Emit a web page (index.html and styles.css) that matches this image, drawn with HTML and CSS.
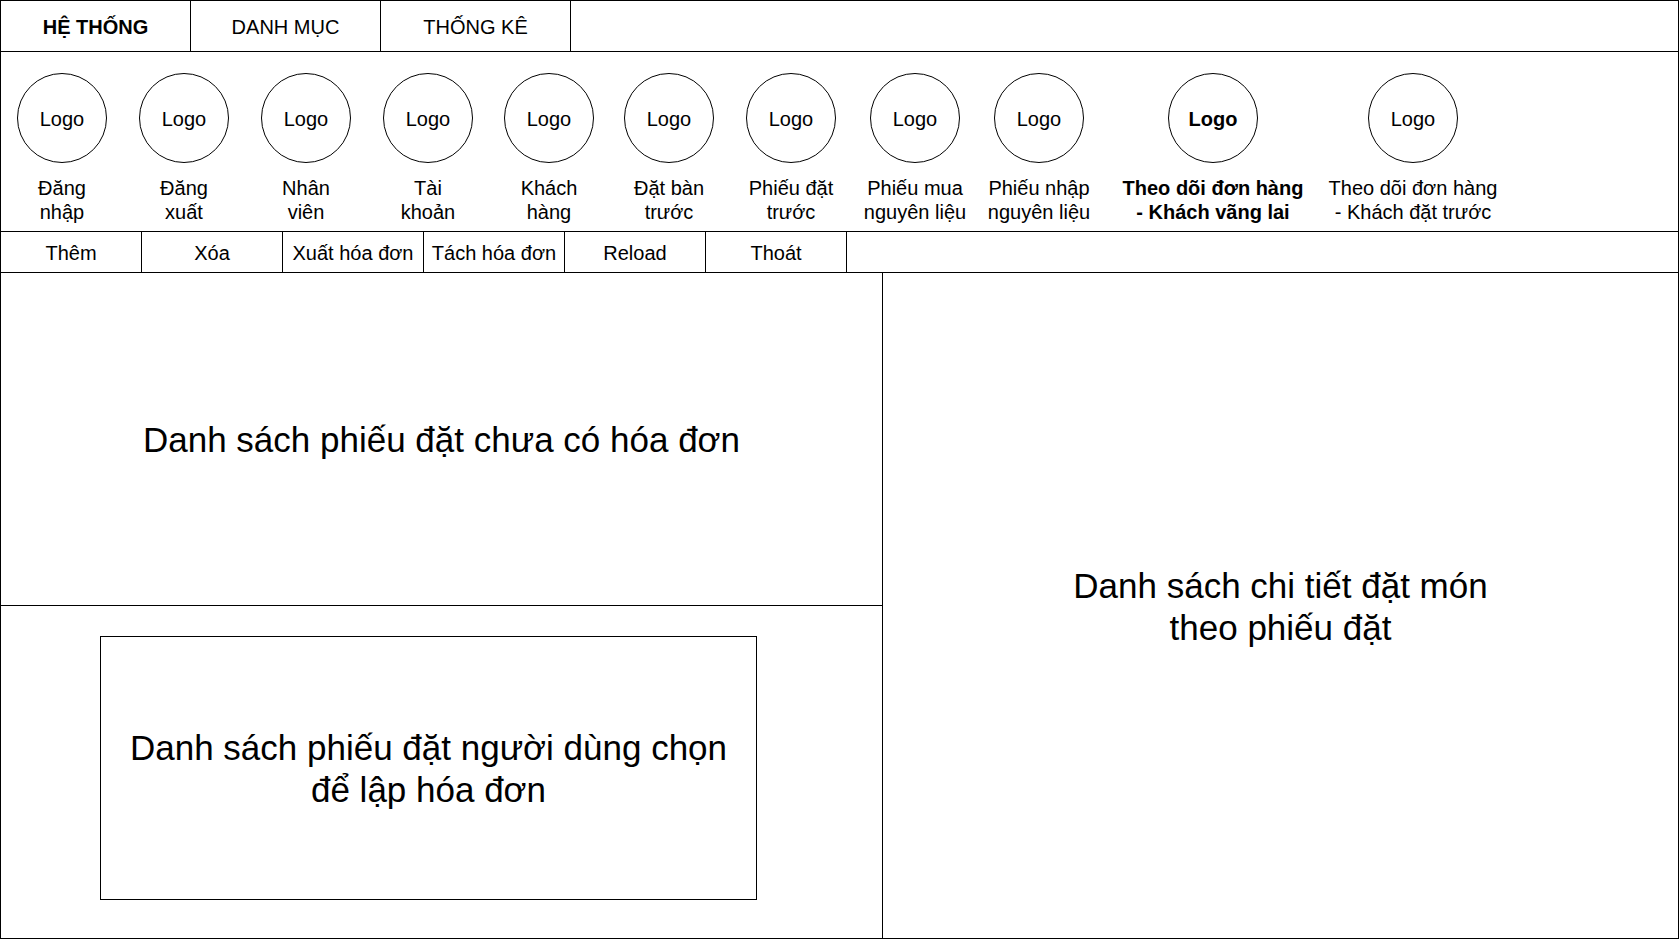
FILE: index.html
```html
<!DOCTYPE html>
<html lang="vi">
<head>
    <meta charset="UTF-8">
    <meta name="viewport" content="width=device-width, initial-scale=1.0">
    <title>Lập hóa đơn</title>
    <link rel="stylesheet" href="styles.css">
</head>
<body>
    <div class="app">
        <div class="tabs">
            <div class="tab active">HỆ THỐNG</div>
            <div class="tab">DANH MỤC</div>
            <div class="tab">THỐNG KÊ</div>
        </div>

        <div class="ribbon">
            <div class="tool">
                <div class="logo">Logo</div>
                <div class="tool-label">Đăng<br>nhập</div>
            </div>
            <div class="tool">
                <div class="logo">Logo</div>
                <div class="tool-label">Đăng<br>xuất</div>
            </div>
            <div class="tool">
                <div class="logo">Logo</div>
                <div class="tool-label">Nhân<br>viên</div>
            </div>
            <div class="tool">
                <div class="logo">Logo</div>
                <div class="tool-label">Tài<br>khoản</div>
            </div>
            <div class="tool tool-narrow">
                <div class="logo">Logo</div>
                <div class="tool-label">Khách<br>hàng</div>
            </div>
            <div class="tool tool-narrow">
                <div class="logo">Logo</div>
                <div class="tool-label">Đặt bàn<br>trước</div>
            </div>
            <div class="tool tool-broad">
                <div class="logo">Logo</div>
                <div class="tool-label">Phiếu đặt<br>trước</div>
            </div>
            <div class="tool tool-broad">
                <div class="logo">Logo</div>
                <div class="tool-label">Phiếu mua<br>nguyên liệu</div>
            </div>
            <div class="tool tool-broad">
                <div class="logo">Logo</div>
                <div class="tool-label">Phiếu nhập<br>nguyên liệu</div>
            </div>
            <div class="tool tool-wide active">
                <div class="logo">Logo</div>
                <div class="tool-label">Theo dõi đơn hàng<br>- Khách vãng lai</div>
            </div>
            <div class="tool tool-last">
                <div class="logo">Logo</div>
                <div class="tool-label">Theo dõi đơn hàng<br>- Khách đặt trước</div>
            </div>
        </div>

        <div class="toolbar">
            <div class="btn">Thêm</div>
            <div class="btn">Xóa</div>
            <div class="btn">Xuất hóa đơn</div>
            <div class="btn">Tách hóa đơn</div>
            <div class="btn">Reload</div>
            <div class="btn">Thoát</div>
        </div>

        <div class="main">
            <div class="left">
                <div class="pane pane-top">
                    <p class="pane-text">Danh sách phiếu đặt chưa có hóa đơn</p>
                </div>
                <div class="pane-bottom">
                    <div class="pane selected-box">
                        <p class="pane-text">Danh sách phiếu đặt người dùng chọn<br>để lập hóa đơn</p>
                    </div>
                </div>
            </div>
            <div class="pane right">
                <p class="pane-text">Danh sách chi tiết đặt món<br>theo phiếu đặt</p>
            </div>
        </div>
    </div>
</body>
</html>
```

FILE: styles.css
```css
* {
    box-sizing: border-box;
}

body {
    margin: 0;
    padding: 0;
    font-family: "Liberation Sans", Arial, sans-serif;
    color: #000;
    background-color: #fff;
}

.app {
    width: 1679px;
    height: 939px;
    border: 1px solid #000;
    display: flex;
    flex-direction: column;
}

/* tabs */
.tabs {
    display: flex;
    flex: none;
    height: 51px;
    border-bottom: 1px solid #000;
}

.tab {
    width: 190px;
    padding-top: 2px;
    border-right: 1px solid #000;
    display: flex;
    align-items: center;
    justify-content: center;
    font-size: 20px;
}

.tab.active {
    font-weight: bold;
}

/* ribbon with logos */
.ribbon {
    display: flex;
    flex: none;
    height: 180px;
    padding-top: 21px;
    border-bottom: 1px solid #000;
}

.tool {
    width: 122px;
    display: flex;
    flex-direction: column;
    align-items: center;
    font-size: 20px;
}

.tool-narrow {
    width: 120px;
}

.tool-broad {
    width: 124px;
}

.tool-wide {
    width: 224px;
}

.tool-last {
    width: 176px;
}

.tool.active {
    font-weight: bold;
}

.logo {
    width: 90px;
    height: 90px;
    padding-top: 2px;
    border: 1px solid #000;
    border-radius: 50%;
    display: flex;
    align-items: center;
    justify-content: center;
}

.tool-label {
    margin-top: 13px;
    line-height: 24px;
    text-align: center;
    white-space: nowrap;
}

/* buttons */
.toolbar {
    display: flex;
    flex: none;
    height: 41px;
    border-bottom: 1px solid #000;
}

.btn {
    width: 141px;
    padding-top: 2px;
    border-right: 1px solid #000;
    display: flex;
    align-items: center;
    justify-content: center;
    font-size: 20px;
}

/* content */
.main {
    flex: 1;
    display: flex;
    min-height: 0;
}

.left {
    width: 882px;
    border-right: 1px solid #000;
    display: flex;
    flex-direction: column;
}

.pane {
    display: flex;
    align-items: center;
    justify-content: center;
}

.pane-top {
    height: 333px;
    padding-top: 2px;
    border-bottom: 1px solid #000;
}

.pane-bottom {
    flex: 1;
    padding: 30px 0 0 99px;
}

.selected-box {
    width: 657px;
    height: 264px;
    padding-top: 2px;
    border: 1px solid #000;
}

.right {
    flex: 1;
    padding-top: 2px;
}

.pane-text {
    margin: 0;
    font-size: 35px;
    line-height: 42px;
    text-align: center;
}
```
